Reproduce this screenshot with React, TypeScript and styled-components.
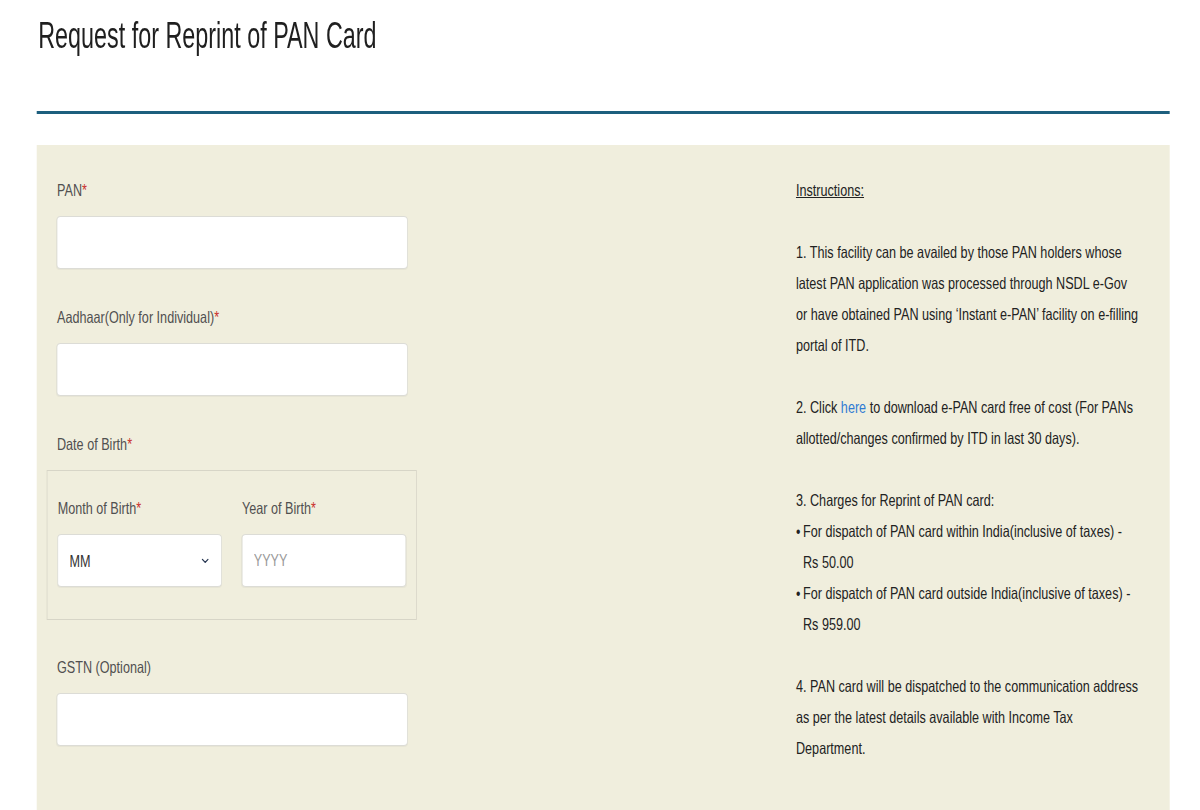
import React from "react";
import styled, { createGlobalStyle } from "styled-components";

/* The reference is a horizontally compressed page: the whole page is laid
   out at its natural width and then compressed by SQUEEZE. */
const SQUEEZE = 0.765;
const px = (v: number) => `${(v / SQUEEZE).toFixed(2)}px`;
const TEXT = 16.5;

const Global = createGlobalStyle`
  html, body { margin: 0; padding: 0; background: #ffffff; }
  body {
    font-family: "Liberation Sans", Arial, Helvetica, sans-serif;
    color: #222222;
    overflow: hidden;
  }
  * { box-sizing: border-box; }
`;

const Stage = styled.div`
  width: ${px(1200)};
  transform: scaleX(${SQUEEZE});
  transform-origin: 0 0;
`;

const Page = styled.div`
  padding: 14px ${px(30)} 0 ${px(37)};
`;

const Header = styled.header`
  height: 100px;
  border-bottom: 3px solid #1d5f7e;
`;

const Title = styled.h1`
  display: inline-block;
  margin: 0 0 0 ${px(1)};
  font-size: 37px;
  line-height: 44px;
  font-weight: 400;
  color: #1f1f1f;
  transform: scaleX(0.825);
  transform-origin: 0 50%;
  white-space: nowrap;
`;

const Panel = styled.section`
  margin-top: 31px;
  min-height: 700px;
  background: #f0eedd;
  padding: 30px ${px(30)} 40px ${px(20)};
  display: grid;
  grid-template-columns: ${px(351)} 1fr;
  column-gap: ${px(388)};
  align-items: start;
`;

const FormColumn = styled.div`
  display: flex;
  flex-direction: column;
`;

const FieldGroup = styled.div<{ $mb?: number }>`
  margin-bottom: ${(p) => p.$mb ?? 33}px;
`;

const Label = styled.label`
  display: block;
  font-size: ${TEXT}px;
  line-height: 30px;
  color: #505050;
  margin-bottom: 11px;
  white-space: nowrap;
`;

const Req = styled.span`
  color: #c9302c;
`;

const TextInput = styled.input`
  display: block;
  width: 100%;
  height: 53px;
  margin: 0;
  border: 1px solid #dcdcd6;
  border-left-width: ${px(1)};
  border-right-width: ${px(1)};
  border-radius: ${px(4)} / 4px;
  background: #ffffff;
  padding: 0 ${px(11)};
  font-family: inherit;
  font-size: ${TEXT}px;
  color: #333333;
  box-shadow: 0 1px 1px rgba(0, 0, 0, 0.04);
  outline: none;
  &::placeholder {
    color: #9a9a9a;
  }
`;

const DateBox = styled.div`
  margin: 0 ${px(-9)} 32px ${px(-10)};
  padding: 22px ${px(10)} 32px;
  border: 1px solid #d7d5c7;
  border-left-width: ${px(1)};
  border-right-width: ${px(1)};
  display: grid;
  grid-template-columns: 1fr 1fr;
  column-gap: ${px(20)};
`;

const SelectWrap = styled.div`
  position: relative;
`;

const Select = styled.select`
  display: block;
  width: 100%;
  height: 53px;
  margin: 0;
  appearance: none;
  -webkit-appearance: none;
  border: 1px solid #dcdcd6;
  border-left-width: ${px(1)};
  border-right-width: ${px(1)};
  border-radius: ${px(4)} / 4px;
  background: #ffffff;
  padding: 0 ${px(30)} 0 ${px(11)};
  font-family: inherit;
  font-size: ${TEXT}px;
  color: #333333;
  box-shadow: 0 1px 1px rgba(0, 0, 0, 0.04);
  outline: none;
`;

const Chevron = styled.svg`
  position: absolute;
  right: ${px(13)};
  top: 50%;
  margin-top: -3px;
  width: ${px(8)};
  height: 6px;
  pointer-events: none;
`;

const Instructions = styled.div`
  font-size: ${TEXT}px;
  line-height: 31px;
  color: #222222;
  white-space: nowrap;
`;

const Heading = styled.div`
  text-decoration: underline;
  margin-bottom: 31px;
`;

const Para = styled.div`
  margin-bottom: 31px;
`;

const Link = styled.a`
  color: #2f7bd3;
  text-decoration: none;
`;

const Bullets = styled.ul`
  list-style: none;
  margin: 0;
  padding: 0;
`;

const Bullet = styled.li`
  padding-left: ${px(7)};
  &::before {
    content: "•";
    display: inline-block;
    width: ${px(7)};
    margin-left: ${px(-7)};
  }
`;

export default function App() {
  return (
    <>
      <Global />
      <Stage>
        <Page>
          <Header>
            <Title>Request for Reprint of PAN Card</Title>
          </Header>
          <Panel>
            <FormColumn>
              <FieldGroup>
                <Label>
                  PAN<Req>*</Req>
                </Label>
                <TextInput type="text" />
              </FieldGroup>
              <FieldGroup>
                <Label>
                  Aadhaar(Only for Individual)<Req>*</Req>
                </Label>
                <TextInput type="text" />
              </FieldGroup>
              <FieldGroup $mb={0}>
                <Label>
                  Date of Birth<Req>*</Req>
                </Label>
              </FieldGroup>
              <DateBox>
                <div>
                  <Label>
                    Month of Birth<Req>*</Req>
                  </Label>
                  <SelectWrap>
                    <Select defaultValue="MM">
                      <option value="MM">MM</option>
                    </Select>
                    <Chevron viewBox="0 0 8 6" preserveAspectRatio="none">
                      <path
                        d="M1.2 1.4 L4 4.4 L6.8 1.4"
                        fill="none"
                        stroke="#2b3a55"
                        strokeWidth="1.3"
                        strokeLinecap="round"
                        strokeLinejoin="round"
                      />
                    </Chevron>
                  </SelectWrap>
                </div>
                <div>
                  <Label>
                    Year of Birth<Req>*</Req>
                  </Label>
                  <TextInput type="text" placeholder="YYYY" />
                </div>
              </DateBox>
              <FieldGroup>
                <Label>GSTN (Optional)</Label>
                <TextInput type="text" />
              </FieldGroup>
            </FormColumn>
            <Instructions>
              <Heading>Instructions:</Heading>
              <Para>
                1. This facility can be availed by those PAN holders whose
                <br />
                latest PAN application was processed through NSDL e-Gov
                <br />
                or have obtained PAN using ‘Instant e-PAN’ facility on e-filling
                <br />
                portal of ITD.
              </Para>
              <Para>
                2. Click <Link href="#">here</Link> to download e-PAN card free of cost (For PANs
                <br />
                allotted/changes confirmed by ITD in last 30 days).
              </Para>
              <Para>
                3. Charges for Reprint of PAN card:
                <Bullets>
                  <Bullet>
                    For dispatch of PAN card within India(inclusive of taxes) -
                    <br />
                    Rs 50.00
                  </Bullet>
                  <Bullet>
                    For dispatch of PAN card outside India(inclusive of taxes) -
                    <br />
                    Rs 959.00
                  </Bullet>
                </Bullets>
              </Para>
              <Para>
                4. PAN card will be dispatched to the communication address
                <br />
                as per the latest details available with Income Tax
                <br />
                Department.
              </Para>
            </Instructions>
          </Panel>
        </Page>
      </Stage>
    </>
  );
}
